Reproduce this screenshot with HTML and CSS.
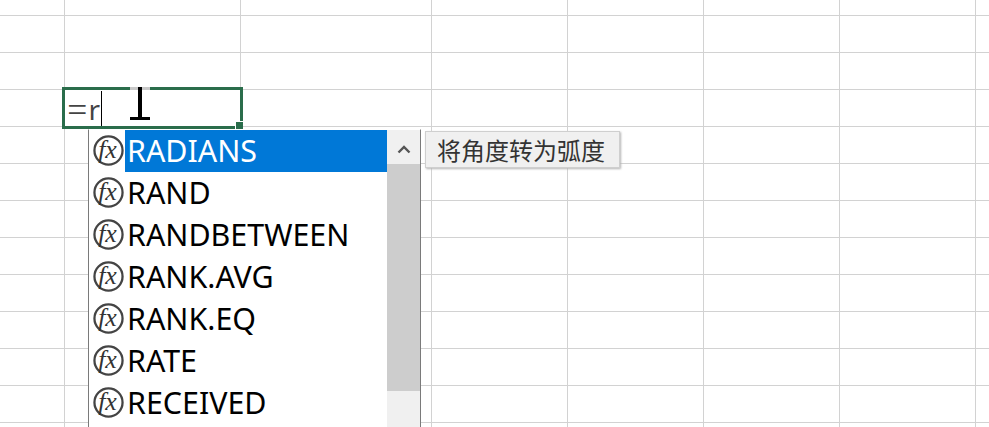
FILE: index.html
```html
<!DOCTYPE html>
<html lang="zh-CN">
<head>
<meta charset="utf-8">
<title>Excel autocomplete</title>
<link rel="stylesheet" href="styles.css">
</head>
<body>
<div class="sheet">
  <div class="grid">
    <i></i><i></i><i></i><i></i><i></i><i></i><i></i><i></i>
    <i></i><i></i><i></i><i></i><i></i><i></i><i></i><i></i>
    <i></i><i></i><i></i><i></i><i></i><i></i><i></i><i></i>
    <i></i><i></i><i></i><i></i><i></i><i></i><i></i><i></i>
    <i></i><i></i><i></i><i></i><i></i><i></i><i></i><i></i>
    <i></i><i></i><i></i><i></i><i></i><i></i><i></i><i></i>
    <i></i><i></i><i></i><i></i><i></i><i></i><i></i><i></i>
    <i></i><i></i><i></i><i></i><i></i><i></i><i></i><i></i>
    <i></i><i></i><i></i><i></i><i></i><i></i><i></i><i></i>
    <i></i><i></i><i></i><i></i><i></i><i></i><i></i><i></i>
    <i></i><i></i><i></i><i></i><i></i><i></i><i></i><i></i>
    <i></i><i></i><i></i><i></i><i></i><i></i><i></i><i></i>
    <i></i><i></i><i></i><i></i><i></i><i></i><i></i><i></i>
  </div>

  <div class="editor"><span class="formula"><span class="eq">=</span>r</span><span class="caret"></span><span class="handle"></span></div>

  <svg class="ibeam" width="20" height="34" viewBox="0 0 20 34" aria-hidden="true">
    <rect x="0" y="0" width="20" height="3" fill="#c9c9c9"/>
    <rect x="8" y="0" width="4" height="32" fill="#000"/>
    <rect x="0" y="30" width="20" height="3" fill="#000"/>
  </svg>

  <div class="list">
    <ul class="items">
      <li class="item active"><svg class="fx" viewBox="0 0 30 30" aria-hidden="true"><circle cx="15" cy="15" r="13.6"/><text x="14" y="22">fx</text></svg><span class="label">RADIANS</span></li>
      <li class="item"><svg class="fx" viewBox="0 0 30 30" aria-hidden="true"><circle cx="15" cy="15" r="13.6"/><text x="14" y="22">fx</text></svg><span class="label">RAND</span></li>
      <li class="item"><svg class="fx" viewBox="0 0 30 30" aria-hidden="true"><circle cx="15" cy="15" r="13.6"/><text x="14" y="22">fx</text></svg><span class="label">RANDBETWEEN</span></li>
      <li class="item"><svg class="fx" viewBox="0 0 30 30" aria-hidden="true"><circle cx="15" cy="15" r="13.6"/><text x="14" y="22">fx</text></svg><span class="label">RANK.AVG</span></li>
      <li class="item"><svg class="fx" viewBox="0 0 30 30" aria-hidden="true"><circle cx="15" cy="15" r="13.6"/><text x="14" y="22">fx</text></svg><span class="label">RANK.EQ</span></li>
      <li class="item"><svg class="fx" viewBox="0 0 30 30" aria-hidden="true"><circle cx="15" cy="15" r="13.6"/><text x="14" y="22">fx</text></svg><span class="label">RATE</span></li>
      <li class="item"><svg class="fx" viewBox="0 0 30 30" aria-hidden="true"><circle cx="15" cy="15" r="13.6"/><text x="14" y="22">fx</text></svg><span class="label">RECEIVED</span></li>
    </ul>
    <div class="scrollbar">
      <div class="arrow"><svg width="14" height="9" viewBox="0 0 14 9" aria-hidden="true"><path d="M1.5 7.5 L7 2 L12.5 7.5" fill="none" stroke="#555" stroke-width="2.4"/></svg></div>
      <div class="thumb"></div>
    </div>
  </div>

  <div class="tip">将角度转为弧度</div>
</div>
</body>
</html>
```
FILE: styles.css
```css
* { box-sizing: border-box; }
html, body { margin: 0; padding: 0; height: 100%; overflow: hidden; background: #fff; }
.sheet { position: relative; width: 989px; height: 427px; overflow: hidden; }

.grid {
  display: grid;
  grid-template-columns: 65px 176px 191px 136px 136px 136px 136px 13px;
  grid-template-rows: 16px repeat(12, 37px);
}
.grid i { display: block; border-right: 1px solid #d2d2d2; border-bottom: 1px solid #d2d2d2; }
.grid i:nth-child(8n) { border-right: 0; }

.editor {
  position: absolute; left: 62px; top: 87px; width: 181px; height: 42px;
  border: 3px solid #2a6d4b; background: #fff;
  display: flex; align-items: center; padding-left: 2px;
}
.formula { font: 28px/1 "Noto Sans", "Open Sans", sans-serif; color: #444; padding-top: 2px; }
.eq { font-size: 36px; font-weight: 300; line-height: 0; margin-right: 1px; vertical-align: -2px; }
.caret { width: 1px; height: 35px; background: #000; margin-left: 1px; }
.handle { position: absolute; right: -3px; bottom: -3px; width: 8px; height: 8px; background: #2a6d4b; border-top: 1px solid #fff; border-left: 1px solid #fff; }

.ibeam { position: absolute; left: 130px; top: 87px; }

.list {
  position: absolute; left: 88px; top: 129px; width: 333px; height: 320px;
  background: #fff; border: 1px solid #7a7a7a; border-top-color: #fff;
  display: flex;
}
.items { list-style: none; margin: 0; padding: 0; flex: 1; min-width: 0; }
.item { display: flex; align-items: center; height: 42px; }
.fx { width: 31px; height: 31px; margin: 0 1px 1px 4px; flex: none; }
.fx circle { fill: #fff; stroke: #444; stroke-width: 2.2; }
.fx text { font: italic 25px "Liberation Serif", serif; fill: #333; text-anchor: middle; }
.label { flex: 1; align-self: stretch; display: flex; align-items: center; padding: 0 0 0 2px; font: 30.4px/1 "Noto Sans", "Open Sans", sans-serif; color: #000; white-space: nowrap; }
.active .label { background: #0078d7; color: #fff; }

.scrollbar { width: 33px; flex: none; background: #f0f0f0; }
.arrow { height: 34px; display: flex; align-items: center; justify-content: center; padding-top: 4px; }
.thumb { height: 227px; background: #cdcdcd; }

.tip {
  position: absolute; left: 425px; top: 131px; width: 195px; height: 37px;
  background: #f0f0f0; border: 1px solid #cfcfcf; box-shadow: 1px 1px 2px #b5b5b5;
  padding-left: 11px; display: flex; align-items: center;
  font: 24px/1 "Noto Sans CJK SC", sans-serif; color: #333; white-space: nowrap;
}
```
